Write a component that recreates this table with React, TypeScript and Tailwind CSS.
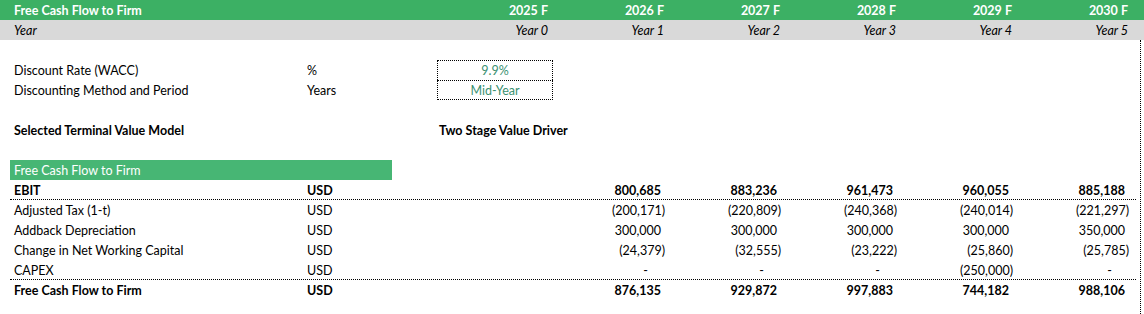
import React from "react";

const GRID = "grid grid-cols-[10px_293px_134px_repeat(6,116px)]";

type Row = { label: string; bold?: boolean; border?: boolean; vals: string[] };

const rows: Row[] = [
  { label: "EBIT", bold: true, border: true, vals: ["800,685 ", "883,236 ", "961,473 ", "960,055 ", "885,188 "] },
  { label: "Adjusted Tax (1-t)", vals: ["(200,171)", "(220,809)", "(240,368)", "(240,014)", "(221,297)"] },
  { label: "Addback Depreciation", vals: ["300,000 ", "300,000 ", "300,000 ", "300,000 ", "350,000 "] },
  { label: "Change in Net Working Capital", vals: ["(24,379)", "(32,555)", "(23,222)", "(25,860)", "(25,785)"] },
  { label: "CAPEX", border: true, vals: ["-", "-", "-", "(250,000)", "-"] },
  { label: "Free Cash Flow to Firm", bold: true, vals: ["876,135 ", "929,872 ", "997,883 ", "744,182 ", "988,106 "] },
];

function NumCell({ v }: { v: string }) {
  if (v === "-") {
    return <div className="text-right pr-[21px]">-</div>;
  }
  if (v.endsWith(" ")) {
    return <div className="text-right pr-[8px]">{v.trim()}</div>;
  }
  return <div className="text-right pr-[4px]">{v}</div>;
}

export default function App() {
  const years = ["2025 F", "2026 F", "2027 F", "2028 F", "2029 F", "2030 F"];
  return (
    <div
      className="w-[1144px] h-[314px] bg-white text-black text-[12.5px] leading-[22px] overflow-hidden"
      style={{ fontFamily: "Lato, 'Open Sans', sans-serif" }}
    >
      {/* Header */}
      <div className={`${GRID} h-5 bg-[#3cb064] text-white font-bold w-[1144px] overflow-hidden`}>
        <div />
        <div className="pl-1">Free Cash Flow to Firm</div>
        <div />
        {years.map((y) => (
          <div key={y} className="text-right pr-[5px]">{y}</div>
        ))}
      </div>
      <div className={`${GRID} h-5 bg-[#d9d9d9] italic w-[1144px] overflow-hidden`}>
        <div />
        <div className="pl-1">Year</div>
        <div />
        {years.map((y, i) => (
          <div key={y} className="text-right pr-[5px]">Year {i}</div>
        ))}
      </div>

      {/* Body with right dotted border */}
      <div className="w-[1141px] h-[274px] border-r border-dotted border-black">
        <div className="h-5" />
        <div className={`${GRID} h-5`}>
          <div />
          <div className="pl-1">Discount Rate (WACC)</div>
          <div className="pl-1">%</div>
          <div className="h-5 border border-dotted border-black border-b-0 text-center text-[#3b9172] leading-[20px]">9.9%</div>
        </div>
        <div className={`${GRID} h-5`}>
          <div />
          <div className="pl-1">Discounting Method and Period</div>
          <div className="pl-1">Years</div>
          <div className="h-5 border border-dotted border-black text-center text-[#3b9172] leading-[19px]">Mid-Year</div>
        </div>
        <div className="h-5" />
        <div className={`${GRID} h-5 font-bold`}>
          <div />
          <div className="pl-1">Selected Terminal Value Model</div>
          <div />
          <div className="pl-[2px] whitespace-nowrap">Two Stage Value Driver</div>
        </div>
        <div className="h-5" />
        <div className="flex h-5">
          <div className="w-[10px]" />
          <div className="w-[382px] h-5 bg-[#47b674] text-white pl-1 overflow-hidden">Free Cash Flow to Firm</div>
        </div>
        {rows.map((r) => (
          <div key={r.label} className="flex">
            <div className="w-[10px]" />
            <div
              className={`grid grid-cols-[293px_134px_repeat(6,116px)] w-[1126px] h-5 overflow-hidden ${
                r.bold ? "font-bold" : ""
              } ${r.border ? "border-b border-dotted border-black" : ""}`}
            >
              <div className="pl-1">{r.label}</div>
              <div className="pl-1">USD</div>
              <div />
              {r.vals.map((v, i) => (
                <NumCell key={i} v={v} />
              ))}
            </div>
          </div>
        ))}
      </div>
    </div>
  );
}
